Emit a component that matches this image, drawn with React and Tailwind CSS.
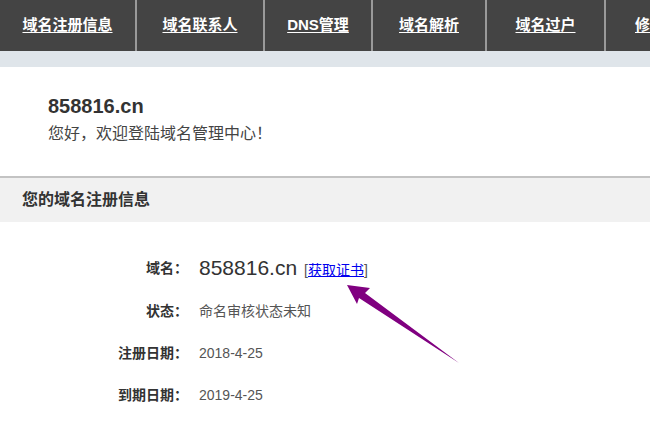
import React from "react";

const tabs = [
  { label: "域名注册信息", w: "w-[137px]" },
  { label: "域名联系人", w: "w-[128px]" },
  { label: "DNS管理", w: "w-[108px]" },
  { label: "域名解析", w: "w-[114px]" },
  { label: "域名过户", w: "w-[119px]" },
  { label: "修改密码", w: "w-[120px]" },
];

const rows = [
  { label: "状态：", value: "命名审核状态未知" },
  { label: "注册日期：", value: "2018-4-25" },
  { label: "到期日期：", value: "2019-4-25" },
];

const font = { fontFamily: '"Liberation Sans", Arial, "Noto Sans CJK SC", sans-serif' };

export default function App() {
  return (
    <div className="relative w-[650px] h-[423px] overflow-hidden bg-white text-[#333]" style={font}>
      <nav className="flex h-[51px] bg-[#444444] overflow-hidden">
        {tabs.map((t, i) => (
          <div
            key={i}
            className={`${t.w} shrink-0 flex items-center justify-center border-r-2 border-[#9a9a9a] h-full`}
          >
            <a className="text-white text-[15px] font-bold underline underline-offset-2 whitespace-nowrap">
              {t.label}
            </a>
          </div>
        ))}
      </nav>
      <div className="h-[16px] bg-[#dfe5ea]" />

      <div className="pl-[48px] pt-[26px] h-[109px]">
        <h1 className="text-[20px] font-bold leading-[26px] text-[#333]">858816.cn</h1>
        <p className="text-[16px] leading-[26px] mt-[2px] text-[#444]">您好，欢迎登陆域名管理中心！</p>
      </div>

      <div className="border-t-2 border-[#c3c3c3] bg-[#f1f1f1] h-[46px] flex items-center pl-[22px]">
        <h2 className="text-[16px] font-bold text-[#333]">您的域名注册信息</h2>
      </div>

      <div className="pt-[24px]">
        <div className="flex items-center h-[44px]">
          <div className="w-[188px] text-right text-[14px] font-bold">域名：</div>
          <div className="pl-[11px] flex items-baseline gap-[7px]">
            <span className="text-[21px] text-[#333]">858816.cn</span>
            <span className="text-[14px] text-[#555]">
              [<a className="text-[#0000ee] underline">获取证书</a>]
            </span>
          </div>
        </div>
        {rows.map((r, i) => (
          <div key={i} className="flex items-center h-[42px]">
            <div className="w-[188px] text-right text-[14px] font-bold">{r.label}</div>
            <div className="pl-[11px] text-[14px] text-[#555]">{r.value}</div>
          </div>
        ))}
      </div>

      <svg className="absolute left-0 top-0" width="650" height="423" viewBox="0 0 650 423">
        <polygon
          points="347,285 370,288 365,293 459,363 359,298 357,304"
          fill="#800080"
        />
      </svg>
    </div>
  );
}
